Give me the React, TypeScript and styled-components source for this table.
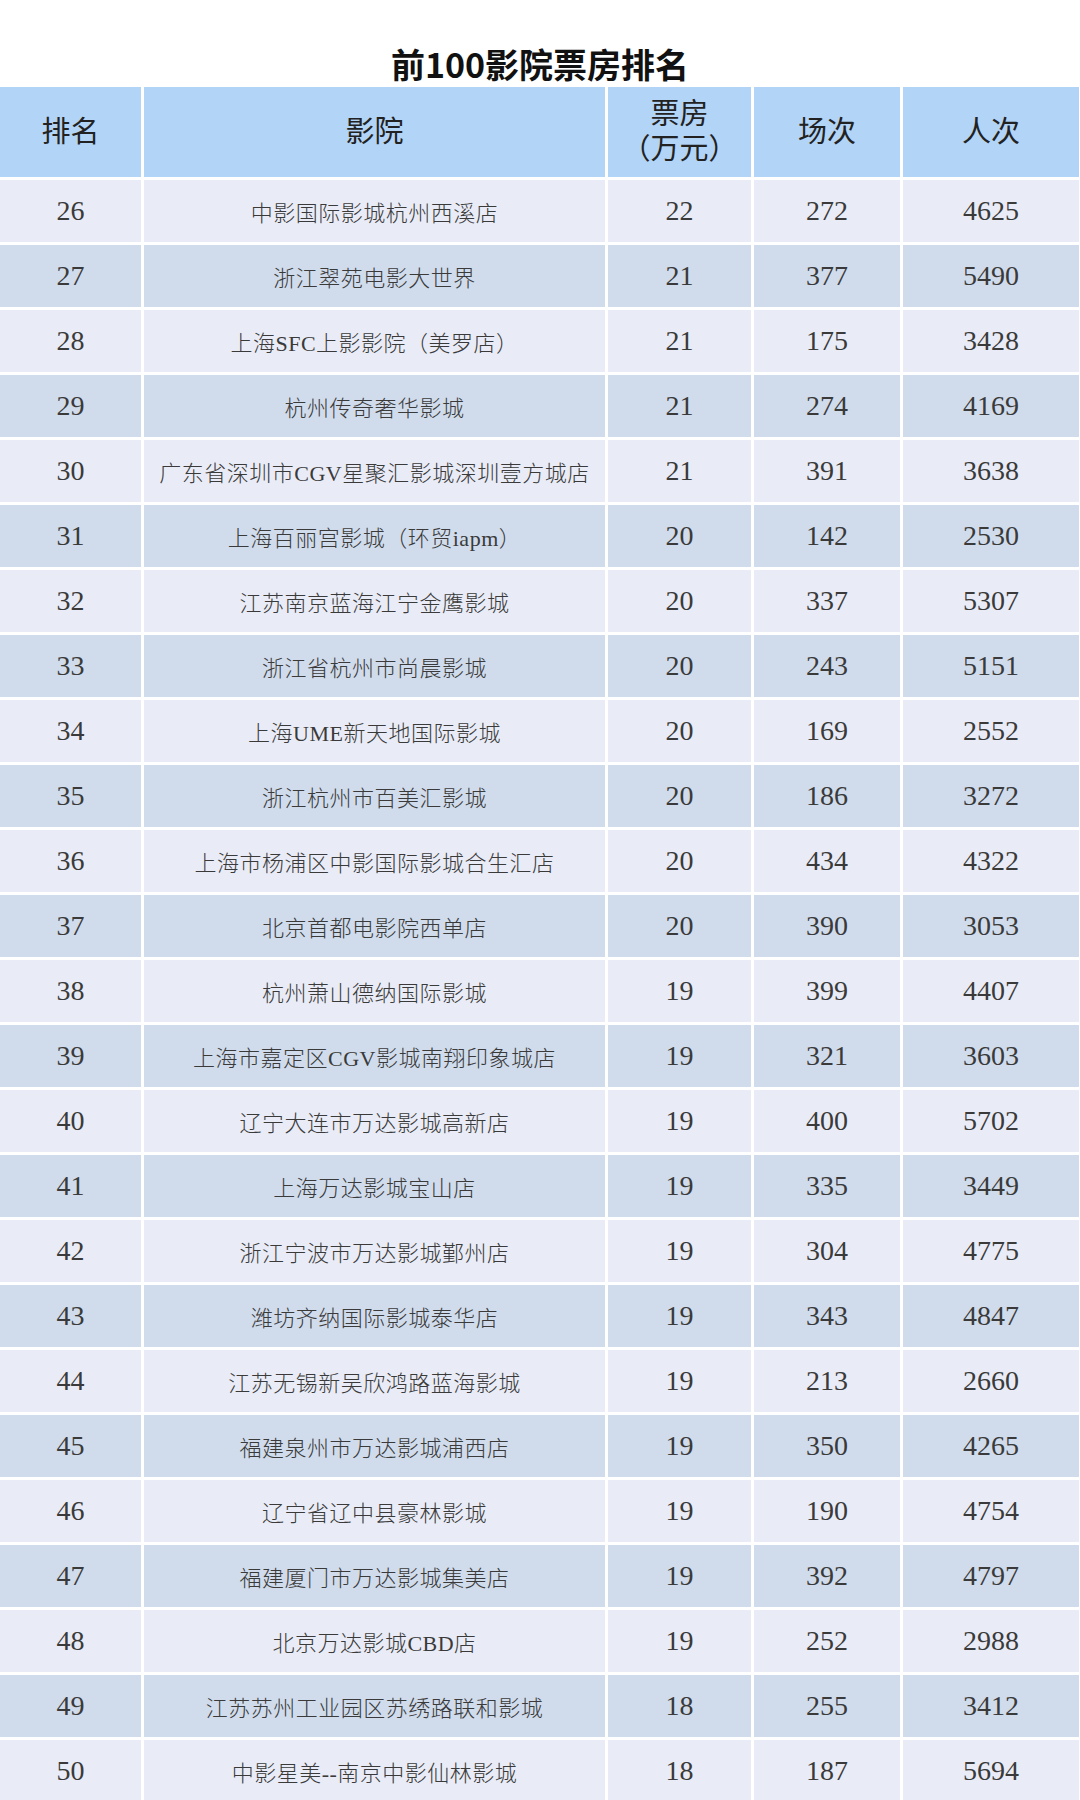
import React from 'react'
import styled, { createGlobalStyle } from 'styled-components'

const GlobalStyle = createGlobalStyle`
  html, body {
    margin: 0;
    padding: 0;
    background: #ffffff;
  }
  body {
    font-family: "Liberation Serif", "Noto Sans CJK SC", serif;
  }
`

type Row = {
  rank: number
  cinema: string
  box: number
  shows: number
  people: number
}

const rows: Row[] = [
  { rank: 26, cinema: '中影国际影城杭州西溪店', box: 22, shows: 272, people: 4625 },
  { rank: 27, cinema: '浙江翠苑电影大世界', box: 21, shows: 377, people: 5490 },
  { rank: 28, cinema: '上海SFC上影影院（美罗店）', box: 21, shows: 175, people: 3428 },
  { rank: 29, cinema: '杭州传奇奢华影城', box: 21, shows: 274, people: 4169 },
  { rank: 30, cinema: '广东省深圳市CGV星聚汇影城深圳壹方城店', box: 21, shows: 391, people: 3638 },
  { rank: 31, cinema: '上海百丽宫影城（环贸iapm）', box: 20, shows: 142, people: 2530 },
  { rank: 32, cinema: '江苏南京蓝海江宁金鹰影城', box: 20, shows: 337, people: 5307 },
  { rank: 33, cinema: '浙江省杭州市尚晨影城', box: 20, shows: 243, people: 5151 },
  { rank: 34, cinema: '上海UME新天地国际影城', box: 20, shows: 169, people: 2552 },
  { rank: 35, cinema: '浙江杭州市百美汇影城', box: 20, shows: 186, people: 3272 },
  { rank: 36, cinema: '上海市杨浦区中影国际影城合生汇店', box: 20, shows: 434, people: 4322 },
  { rank: 37, cinema: '北京首都电影院西单店', box: 20, shows: 390, people: 3053 },
  { rank: 38, cinema: '杭州萧山德纳国际影城', box: 19, shows: 399, people: 4407 },
  { rank: 39, cinema: '上海市嘉定区CGV影城南翔印象城店', box: 19, shows: 321, people: 3603 },
  { rank: 40, cinema: '辽宁大连市万达影城高新店', box: 19, shows: 400, people: 5702 },
  { rank: 41, cinema: '上海万达影城宝山店', box: 19, shows: 335, people: 3449 },
  { rank: 42, cinema: '浙江宁波市万达影城鄞州店', box: 19, shows: 304, people: 4775 },
  { rank: 43, cinema: '潍坊齐纳国际影城泰华店', box: 19, shows: 343, people: 4847 },
  { rank: 44, cinema: '江苏无锡新吴欣鸿路蓝海影城', box: 19, shows: 213, people: 2660 },
  { rank: 45, cinema: '福建泉州市万达影城浦西店', box: 19, shows: 350, people: 4265 },
  { rank: 46, cinema: '辽宁省辽中县豪林影城', box: 19, shows: 190, people: 4754 },
  { rank: 47, cinema: '福建厦门市万达影城集美店', box: 19, shows: 392, people: 4797 },
  { rank: 48, cinema: '北京万达影城CBD店', box: 19, shows: 252, people: 2988 },
  { rank: 49, cinema: '江苏苏州工业园区苏绣路联和影城', box: 18, shows: 255, people: 3412 },
  { rank: 50, cinema: '中影星美--南京中影仙林影城', box: 18, shows: 187, people: 5694 },
]

const Page = styled.div`
  width: 1080px;
  height: 1800px;
  overflow: hidden;
  background: #ffffff;
`

const Title = styled.h1`
  margin: 0;
  height: 87px;
  padding-top: 44px;
  box-sizing: border-box;
  text-align: center;
  font-family: "Noto Sans CJK SC", "Liberation Sans", sans-serif;
  font-size: 34px;
  line-height: 40px;
  font-weight: 700;
  color: #111111;
`

const Table = styled.div`
  display: grid;
  grid-template-columns: 141px 461px 143px 146px 1fr;
  grid-template-rows: 90px;
  grid-auto-rows: 62px;
  gap: 3px;
  padding-right: 1px;
`

const HeadCell = styled.div`
  display: flex;
  flex-direction: column;
  align-items: center;
  justify-content: center;
  background: #b2d4f6;
  color: #222222;
  font-family: "Liberation Serif", "Noto Sans CJK SC", serif;
  font-size: 29px;
  line-height: 35px;
  text-align: center;
`

const Cell = styled.div<{ $dark: boolean; $name?: boolean }>`
  display: flex;
  align-items: center;
  justify-content: center;
  background: ${(p) => (p.$dark ? '#d0dcec' : '#e9ecf6')};
  color: #3a3a3a;
  font-family: "Liberation Serif", "Noto Sans CJK SC", serif;
  font-size: ${(p) => (p.$name ? '22px' : '28px')};
  font-weight: ${(p) => (p.$name ? 300 : 400)};
  letter-spacing: ${(p) => (p.$name ? '0.5px' : '0')};
  white-space: nowrap;
`

export default function App() {
  return (
    <Page>
      <GlobalStyle />
      <Title>前100影院票房排名</Title>
      <Table>
        <HeadCell>排名</HeadCell>
        <HeadCell>影院</HeadCell>
        <HeadCell>
          <span>票房</span>
          <span>（万元）</span>
        </HeadCell>
        <HeadCell>场次</HeadCell>
        <HeadCell>人次</HeadCell>
        {rows.map((r, idx) => {
          const dark = idx % 2 === 1
          return (
            <React.Fragment key={r.rank}>
              <Cell $dark={dark}>{r.rank}</Cell>
              <Cell $dark={dark} $name>{r.cinema}</Cell>
              <Cell $dark={dark}>{r.box}</Cell>
              <Cell $dark={dark}>{r.shows}</Cell>
              <Cell $dark={dark}>{r.people}</Cell>
            </React.Fragment>
          )
        })}
      </Table>
    </Page>
  )
}
